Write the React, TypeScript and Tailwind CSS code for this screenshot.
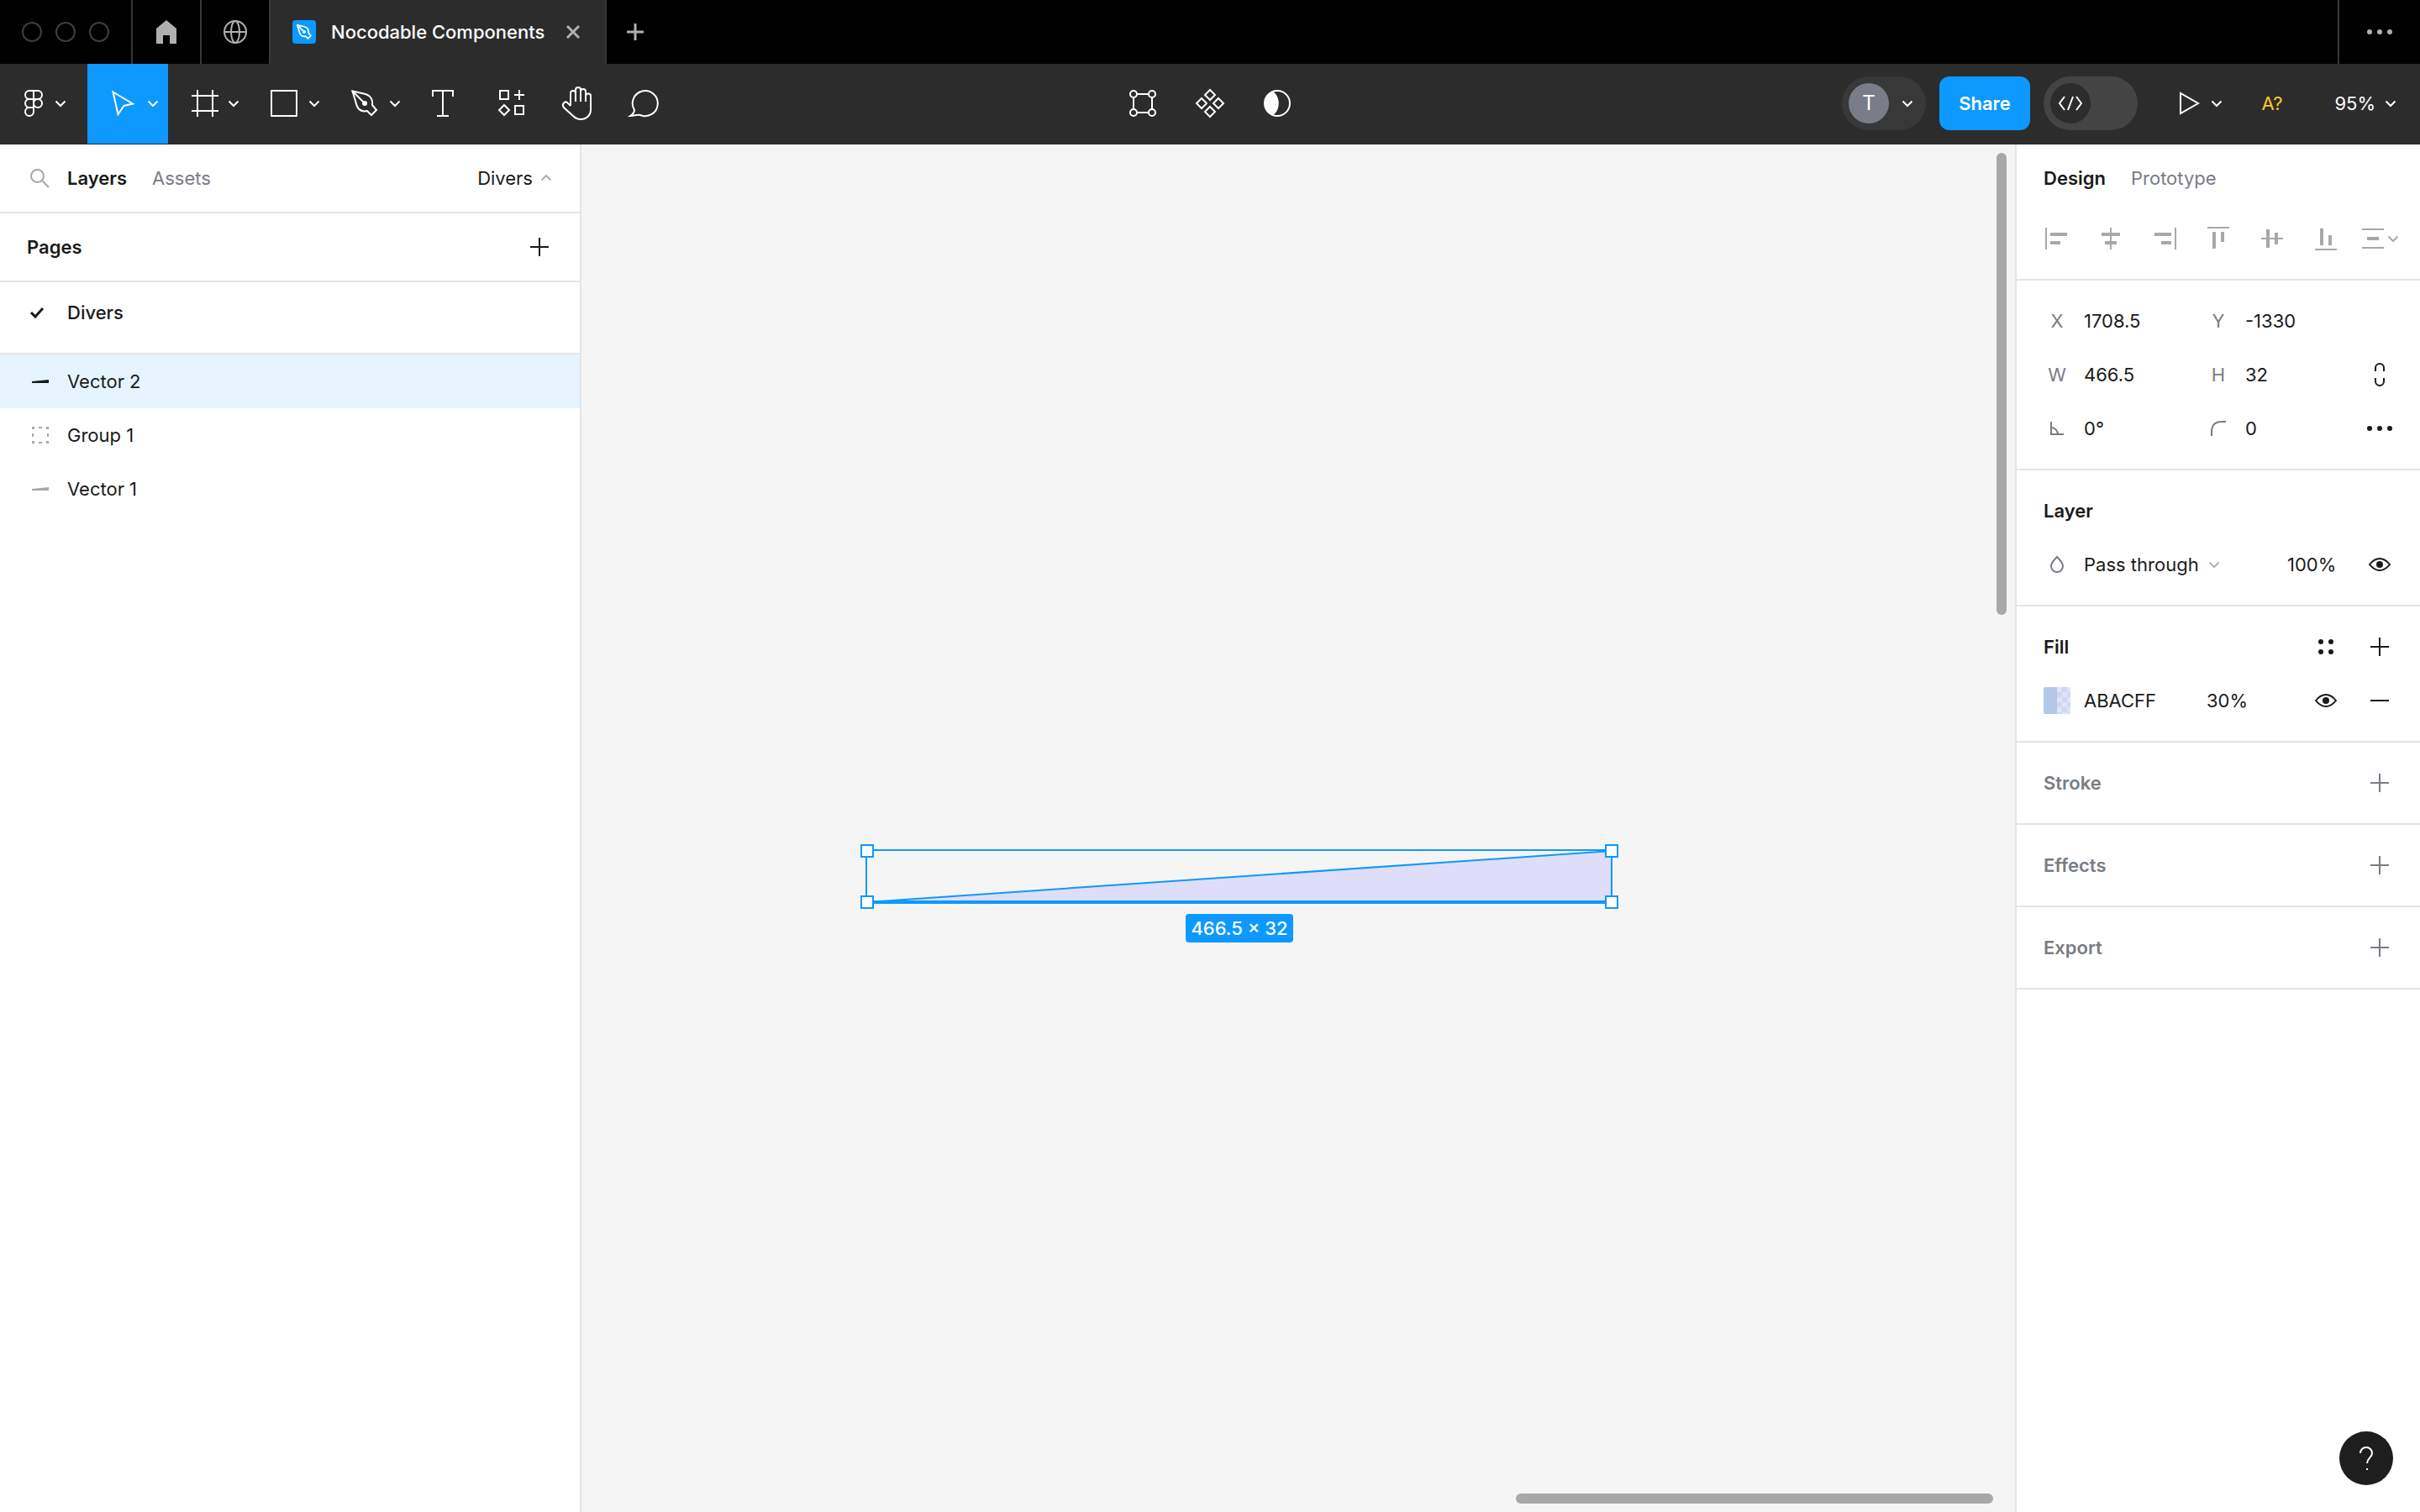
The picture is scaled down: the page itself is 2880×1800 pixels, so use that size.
import type { ReactNode } from 'react'

type GlyphProps = {
  w: number
  h: number
  className?: string
  children: ReactNode
}

const Glyph = ({ w, h, className = '', children }: GlyphProps) => (
  <svg
    width={w}
    height={h}
    viewBox={`0 0 ${w} ${h}`}
    fill="none"
    stroke="currentColor"
    strokeWidth={2}
    aria-hidden="true"
    className={`shrink-0 overflow-visible ${className}`}
  >
    {children}
  </svg>
)

const Chevron = ({ className = '' }: { className?: string }) => (
  <Glyph w={12} h={12} className={className}>
    <path d="M0.5 3.5 6 9l5.5-5.5" />
  </Glyph>
)

const Plus = ({ className = '' }: { className?: string }) => (
  <Glyph w={22} h={22} className={className}>
    <path d="M11 0v22M0 11h22" />
  </Glyph>
)

const Eye = () => (
  <Glyph w={26} h={16}>
    <path d="M1 8c4-5 8-7 12-7s8 2 12 7c-4 5-8 7-12 7S5 13 1 8z" />
    <circle cx="13" cy="8" r="4" fill="currentColor" stroke="none" />
  </Glyph>
)

const Dots = () => (
  <Glyph w={32} h={8}>
    <g fill="currentColor" stroke="none">
      <circle cx="4" cy="4" r="3" />
      <circle cx="16" cy="4" r="3" />
      <circle cx="28" cy="4" r="3" />
    </g>
  </Glyph>
)

const penPath =
  'M1.5 1.5 15 4.5C22 6 26 11 25 18l5 6-6 6-5-5C11 27 7 22 5.5 15z'

/* ---------- window tabs ---------- */

const TabBar = () => (
  <header className="flex h-[76px] shrink-0 bg-black text-[#b0b0b3]">
    <div className="flex w-[158px] items-center gap-4 border-r-2 border-[#383838] pl-[26px]">
      <span className="size-6 rounded-full border-2 border-[#3e3e3e]" />
      <span className="size-6 rounded-full border-2 border-[#3e3e3e]" />
      <span className="size-6 rounded-full border-2 border-[#3e3e3e]" />
    </div>
    <button
      type="button"
      aria-label="Home"
      className="flex w-[82px] items-center justify-center border-r-2 border-[#383838]"
    >
      <Glyph w={24} h={28}>
        <path
          d="M12 0 24 10v18h-8V18H8v10H0V10z"
          fill="currentColor"
          stroke="none"
        />
      </Glyph>
    </button>
    <button
      type="button"
      aria-label="Community"
      className="flex w-[82px] items-center justify-center border-r-2 border-[#383838]"
    >
      <Glyph w={28} h={28}>
        <circle cx="14" cy="14" r="13" />
        <ellipse cx="14" cy="14" rx="5" ry="13" />
        <path d="M1 14h26" />
      </Glyph>
    </button>
    <div className="flex w-[400px] items-center border-r-2 border-[#383838] bg-[#2c2c2c] pl-[26px]">
      <span className="flex size-7 items-center justify-center rounded bg-[#0d99ff] text-white">
        <svg
          width="18"
          height="18"
          viewBox="0 0 32 32"
          fill="none"
          stroke="currentColor"
          strokeWidth={3}
          aria-hidden="true"
        >
          <path d={penPath} />
          <path d="m2 2 13 13" />
          <circle cx="16" cy="16" r="2" fill="currentColor" />
        </svg>
      </span>
      <span className="ml-[18px] font-medium whitespace-nowrap text-white">
        Nocodable Components
      </span>
      <button type="button" aria-label="Close tab" className="mr-[30px] ml-auto">
        <Glyph w={16} h={16}>
          <path d="m1 1 14 14M15 1 1 15" strokeWidth={3} />
        </Glyph>
      </button>
    </div>
    <button
      type="button"
      aria-label="New tab"
      className="flex w-[68px] items-center justify-center"
    >
      <Glyph w={20} h={20}>
        <path d="M10 0v20M0 10h20" strokeWidth={3} />
      </Glyph>
    </button>
    <button
      type="button"
      aria-label="More"
      className="ml-auto flex w-[98px] items-center justify-center border-l-2 border-[#383838]"
    >
      <Dots />
    </button>
  </header>
)

/* ---------- toolbar ---------- */

const tools = [
  {
    name: 'Move',
    active: true,
    icon: <path d="M4.5 2.5 28 16.5 17.5 19l-7 10z" />,
  },
  {
    name: 'Frame',
    active: false,
    icon: <path d="M9 0v32M27 0v32M2 7h32M2 25h32" />,
  },
  {
    name: 'Rectangle',
    active: false,
    icon: <path d="M1 1h30v30H1z" />,
  },
  {
    name: 'Pen',
    active: false,
    icon: (
      <>
        <path d={penPath} />
        <path d="m1 1 15 15" />
        <circle cx="16" cy="16" r="3" fill="currentColor" stroke="none" />
      </>
    ),
  },
]

const ToolButton = ({ name, children }: { name: string; children: ReactNode }) => (
  <button
    type="button"
    aria-label={name}
    className="flex w-20 items-center justify-center pb-px"
  >
    {children}
  </button>
)

const Toolbar = () => (
  <div className="grid h-24 shrink-0 grid-cols-[1fr_auto_1fr] bg-[#2c2c2c] pb-px text-white">
    <div className="flex">
      <button
        type="button"
        aria-label="Main menu"
        className="flex w-[104px] items-center gap-[15px] pb-px pl-[29px]"
      >
        <Glyph w={22} h={32}>
          <path d="M11 1H6a5 5 0 0 0 0 10h10a5 5 0 0 0 0-10h-5v20H6a5 5 0 0 1 0-10" />
          <circle cx="16" cy="16" r="5" />
          <path d="M11 21v5a5 5 0 1 1-5-5" />
        </Glyph>
        <Chevron />
      </button>
      {tools.map((tool) => (
        <button
          key={tool.name}
          type="button"
          aria-label={tool.name}
          className={`flex w-24 items-center gap-3 pb-px pl-[26px] ${
            tool.active ? 'bg-[#0d99ff]' : ''
          }`}
        >
          <Glyph w={34} h={32}>
            {tool.icon}
          </Glyph>
          <Chevron />
        </button>
      ))}
      <ToolButton name="Text">
        <Glyph w={32} h={32}>
          <path d="M3 8V1h24v7M15 1v30M8 31h14" />
        </Glyph>
      </ToolButton>
      <ToolButton name="Resources">
        <Glyph w={32} h={32}>
          <path d="M3 1h10v10H3zM26 0v12M20 6h12M21 19h10v10H21z" />
          <path d="m8 18 6 6-6 6-6-6z" />
        </Glyph>
      </ToolButton>
      <ToolButton name="Hand">
        <Glyph w={40} h={40}>
          <path d="M11 23V8a3 3 0 0 1 6 0M17 18V4a3 3 0 0 1 6 0v14M23 6a3 3 0 0 1 6 0v12M29 12v-1a3 3 0 0 1 6 1v16c0 6-5 11-12 11-4 0-6-1-9-4L3 25c-3-4 1-8 4-6l4 4" />
        </Glyph>
      </ToolButton>
      <ToolButton name="Comment">
        <Glyph w={36} h={32}>
          <path d="M5 24a15 15 0 1 1 7 6c-4-1-7 1-12 1 3-2 5-4 5-7z" />
        </Glyph>
      </ToolButton>
    </div>

    <div className="flex">
      <ToolButton name="Edit object">
        <Glyph w={32} h={32}>
          <circle cx="5" cy="5" r="4" />
          <circle cx="27" cy="5" r="4" />
          <circle cx="5" cy="27" r="4" />
          <circle cx="27" cy="27" r="4" />
          <path d="M9 5h14M9 27h14M5 9v14M27 9v14" />
        </Glyph>
      </ToolButton>
      <ToolButton name="Create component">
        <Glyph w={36} h={36}>
          <path d="m18 2 6 6-6 6-6-6zM18 22l6 6-6 6-6-6zM8 12l6 6-6 6-6-6zM28 12l6 6-6 6-6-6z" />
        </Glyph>
      </ToolButton>
      <ToolButton name="Use as mask">
        <Glyph w={32} h={32}>
          <circle cx="16" cy="16" r="15" />
          <path
            d="M11 2c9 6 9 22 0 28A15 15 0 0 1 11 2z"
            fill="currentColor"
            stroke="none"
          />
        </Glyph>
      </ToolButton>
    </div>

    <div className="flex items-center justify-end pb-px">
      <button
        type="button"
        aria-label="Account"
        className="flex h-16 w-[100px] items-center gap-4 rounded-full bg-[#383838] pl-2"
      >
        <span className="flex size-12 items-center justify-center rounded-full bg-[#7a7d88] text-2xl">
          T
        </span>
        <Chevron />
      </button>
      <button
        type="button"
        className="ml-4 h-16 w-[108px] rounded-xl bg-[#0d99ff] font-semibold"
      >
        Share
      </button>
      <label className="ml-4 flex h-16 w-28 items-center rounded-full bg-[#444444] pl-2">
        <input type="checkbox" aria-label="Dev mode" className="sr-only" />
        <span className="flex size-12 items-center justify-center rounded-full bg-[#2c2c2c]">
          <Glyph w={30} h={16}>
            <path d="M8 0 2 8l6 8M18 0l-6 16M22 0l6 8-6 8" />
          </Glyph>
        </span>
      </label>
      <button
        type="button"
        aria-label="Present"
        className="ml-8 flex w-24 items-center gap-3.5 pl-[18px]"
      >
        <Glyph w={24} h={28}>
          <path d="M1 2v24l21-12z" />
        </Glyph>
        <Chevron />
      </button>
      <button type="button" className="w-16 text-[#f9ca2c]">
        A?
      </button>
      <button
        type="button"
        className="flex w-36 items-center justify-end gap-3 pr-[29px]"
      >
        95%
        <Chevron />
      </button>
    </div>
  </div>
)

/* ---------- left panel ---------- */

const GroupIcon = () => (
  <Glyph w={20} h={20} className="text-[#a8a8a8]">
    <path
      d="M0 0h3v3H0zM8 0h4v2H8zM17 0h3v3h-3zM0 8h2v4H0zM18 8h2v4h-2zM0 17h3v3H0zM8 18h4v2H8zM17 17h3v3h-3z"
      fill="currentColor"
      stroke="none"
    />
  </Glyph>
)

const VectorIcon = ({ className }: { className: string }) => (
  <Glyph w={20} h={20} className={className}>
    <path d="M0 10 20 8v4H0z" fill="currentColor" stroke="none" />
  </Glyph>
)

const layers = [
  {
    name: 'Vector 2',
    selected: true,
    icon: <VectorIcon className="text-[#1a1a1a]" />,
  },
  { name: 'Group 1', selected: false, icon: <GroupIcon /> },
  {
    name: 'Vector 1',
    selected: false,
    icon: <VectorIcon className="text-[#a8a8a8]" />,
  },
]

const LeftPanel = () => (
  <aside className="w-[692px] shrink-0 border-r-2 border-[#e5e5e5] bg-white">
    <div className="flex h-[82px] items-center border-b-2 border-[#e5e5e5] pr-[34px] pl-9">
      <button type="button" aria-label="Search" className="text-[#a8a8a8]">
        <Glyph w={22} h={22}>
          <circle cx="8.5" cy="8.5" r="7.5" />
          <path d="m14 14 8 8" />
        </Glyph>
      </button>
      <button type="button" className="ml-[22px] font-semibold">
        Layers
      </button>
      <button type="button" className="ml-[30px] text-[#797c85]">
        Assets
      </button>
      <button type="button" className="ml-auto flex items-center gap-2.5">
        Divers
        <Chevron className="rotate-180 text-[#a8b0bc]" />
      </button>
    </div>
    <div className="flex h-[82px] items-center justify-between border-b-2 border-[#e5e5e5] pr-[37px] pl-8">
      <h2 className="font-semibold">Pages</h2>
      <button type="button" aria-label="Add page">
        <Plus />
      </button>
    </div>
    <div className="border-b-2 border-[#e5e5e5] pt-1 pb-4">
      <button
        type="button"
        className="flex h-16 w-full items-center gap-7 pl-9 font-medium"
      >
        <Glyph w={16} h={12}>
          <path d="m1 6 5 5 9-10" strokeWidth={3} />
        </Glyph>
        Divers
      </button>
    </div>
    <ul>
      {layers.map((layer) => (
        <li key={layer.name}>
          <button
            type="button"
            className={`flex h-16 w-full items-center gap-[22px] pl-[38px] ${
              layer.selected ? 'bg-[#e5f4ff]' : ''
            }`}
          >
            {layer.icon}
            {layer.name}
          </button>
        </li>
      ))}
    </ul>
  </aside>
)

/* ---------- canvas ---------- */

const Canvas = () => (
  <main className="relative min-w-0 flex-1 overflow-hidden bg-[#f5f5f5]">
    <div className="absolute top-[833px] left-[332px] flex flex-col items-center gap-[5px] text-[#0d99ff]">
      <Glyph w={902} h={78}>
        <path d="M8 69 894 8v61z" fill="#dedef9" />
        <path d="M7 7h887v63H7z" />
        <path d="M8 69h886" strokeWidth={4} />
        <g fill="#ffffff">
          <path d="M1 1h14v14H1zM887 1h14v14h-14zM1 62h14v14H1zM887 62h14v14h-14z" />
        </g>
      </Glyph>
      <span className="flex h-[34px] w-32 items-center justify-center rounded bg-[#0d99ff] font-medium whitespace-nowrap text-white">
        466.5 × 32
      </span>
    </div>
    <div className="absolute top-2.5 right-2.5 h-[550px] w-3 rounded-full bg-[#a8a8a8]" />
    <div className="absolute right-[26px] bottom-2.5 h-3 w-[568px] rounded-full bg-[#a8a8a8]" />
  </main>
)

/* ---------- right panel ---------- */

const alignments = [
  { name: 'Align left', d: 'M0 1h2v26H0zM6 7h20v4H6zM6 17h12v4H6z' },
  {
    name: 'Align horizontal centers',
    d: 'M13 1h2v26h-2zM3 7h22v4H3zM7 17h14v4H7z',
  },
  { name: 'Align right', d: 'M26 1h2v26h-2zM2 7h20v4H2zM10 17h12v4H10z' },
  { name: 'Align top', d: 'M1 0h26v2H1zM7 6h4v20H7zM17 6h4v12h-4z' },
  {
    name: 'Align vertical centers',
    d: 'M1 13h26v2H1zM7 3h4v22H7zM17 7h4v14h-4z',
  },
  { name: 'Align bottom', d: 'M1 26h26v2H1zM7 2h4v20H7zM17 10h4v12h-4z' },
]

type FieldProps = { name: string; value: string; icon?: ReactNode }

const Field = ({ name, value, icon }: FieldProps) => (
  <label className="flex h-16 items-center">
    <span className="flex w-16 justify-center text-[#797c85]">
      {icon ?? name}
    </span>
    <input
      aria-label={name}
      defaultValue={value}
      className="w-32 bg-transparent outline-none"
    />
  </label>
)

const RightPanel = () => (
  <aside className="relative w-[482px] shrink-0 border-l-2 border-[#e5e5e5] bg-white">
    <div className="flex h-20 items-center gap-[30px] px-8">
      <button type="button" className="font-semibold">
        Design
      </button>
      <button type="button" className="text-[#797c85]">
        Prototype
      </button>
    </div>
    <div className="grid grid-cols-7 border-b-2 border-[#e5e5e5] px-4 pb-4 text-[#a8a8a8]">
      {alignments.map((item) => (
        <button
          key={item.name}
          type="button"
          aria-label={item.name}
          className="flex h-16 items-center justify-center"
        >
          <Glyph w={28} h={28}>
            <path d={item.d} fill="currentColor" stroke="none" />
          </Glyph>
        </button>
      ))}
      <button
        type="button"
        aria-label="Distribute"
        className="flex h-16 items-center justify-center gap-1"
      >
        <Glyph w={28} h={28}>
          <path
            d="M1 2h26v2H1zM1 24h26v2H1zM7 12h14v4H7z"
            fill="currentColor"
            stroke="none"
          />
        </Glyph>
        <Chevron />
      </button>
    </div>

    <section className="grid grid-cols-[192px_192px_1fr] border-b-2 border-[#e5e5e5] p-4">
      <Field name="X" value="1708.5" />
      <Field name="Y" value="-1330" />
      <span />
      <Field name="W" value="466.5" />
      <Field name="H" value="32" />
      <button
        type="button"
        aria-label="Constrain proportions"
        className="flex items-center justify-center"
      >
        <Glyph w={12} h={28}>
          <path d="M1 10V6a5 5 0 0 1 10 0v4M1 18v4a5 5 0 0 0 10 0v-4" />
        </Glyph>
      </button>
      <Field
        name="Rotation"
        value="0°"
        icon={
          <Glyph w={16} h={16}>
            <path d="M1 0v15h15M1 7a8 8 0 0 1 8 8" />
          </Glyph>
        }
      />
      <Field
        name="Corner radius"
        value="0"
        icon={
          <Glyph w={18} h={18}>
            <path d="M1 18v-5C1 5 5 1 13 1h5" />
          </Glyph>
        }
      />
      <button
        type="button"
        aria-label="Independent corners"
        className="flex items-center justify-center"
      >
        <Dots />
      </button>
    </section>

    <section className="border-b-2 border-[#e5e5e5] p-4">
      <h2 className="flex h-16 items-center pl-4 font-semibold">Layer</h2>
      <div className="flex h-16 items-center">
        <span className="flex w-16 justify-center text-[#797c85]">
          <Glyph w={16} h={20}>
            <path d="M8 1C5 4 1 8 1 12a7 7 0 0 0 14 0c0-4-4-8-7-11z" />
          </Glyph>
        </span>
        <select
          aria-label="Blend mode"
          className="w-[143px] appearance-none bg-transparent outline-none"
        >
          <option>Pass through</option>
        </select>
        <Chevron className="ml-1.5 text-[#a8b0bc]" />
        <input
          aria-label="Layer opacity"
          defaultValue="100%"
          className="ml-auto w-[78px] bg-transparent outline-none"
        />
        <button
          type="button"
          aria-label="Toggle layer"
          className="flex w-16 justify-center"
        >
          <Eye />
        </button>
      </div>
    </section>

    <section className="border-b-2 border-[#e5e5e5] p-4">
      <div className="flex h-16 items-center pl-4">
        <h2 className="mr-auto font-semibold">Fill</h2>
        <button
          type="button"
          aria-label="Styles"
          className="flex w-16 justify-center"
        >
          <Glyph w={18} h={18}>
            <g fill="currentColor" stroke="none">
              <circle cx="3" cy="3" r="3" />
              <circle cx="15" cy="3" r="3" />
              <circle cx="3" cy="15" r="3" />
              <circle cx="15" cy="15" r="3" />
            </g>
          </Glyph>
        </button>
        <button
          type="button"
          aria-label="Add fill"
          className="flex w-16 justify-center"
        >
          <Plus />
        </button>
      </div>
      <div className="flex h-16 items-center pl-4">
        <button
          type="button"
          aria-label="Fill color"
          className="flex size-8 overflow-hidden rounded-xs"
        >
          <span className="h-8 w-4 bg-[#b3c8e8]" />
          <span className="h-8 w-4 bg-[repeating-conic-gradient(#cfd8f0_0_25%,#e0e3fb_0_50%)] bg-[length:12px_12px]" />
        </button>
        <input
          aria-label="Fill hex"
          defaultValue="ABACFF"
          className="ml-4 w-[146px] bg-transparent outline-none"
        />
        <input
          aria-label="Fill opacity"
          defaultValue="30%"
          className="w-20 bg-transparent outline-none"
        />
        <button
          type="button"
          aria-label="Toggle fill"
          className="ml-auto flex w-16 justify-center"
        >
          <Eye />
        </button>
        <button
          type="button"
          aria-label="Remove fill"
          className="flex w-16 justify-center"
        >
          <Glyph w={22} h={22}>
            <path d="M0 11h22" />
          </Glyph>
        </button>
      </div>
    </section>

    {['Stroke', 'Effects', 'Export'].map((title) => (
      <section
        key={title}
        className="border-b-2 border-[#e5e5e5] p-4 text-[#797c85]"
      >
        <div className="flex h-16 items-center justify-between pl-4">
          <h2 className="font-semibold">{title}</h2>
          <button
            type="button"
            aria-label={`Add ${title}`}
            className="flex w-16 justify-center"
          >
            <Plus />
          </button>
        </div>
      </section>
    ))}

    <button
      type="button"
      aria-label="Help"
      className="absolute right-8 bottom-8 flex size-16 items-center justify-center rounded-full bg-[#1e1e1e] text-white"
    >
      <Glyph w={16} h={28}>
        <path d="M1 8a7 7 0 0 1 14 0c0 5-6 6-6 12M9 26v2" />
      </Glyph>
    </button>
  </aside>
)

const App = () => {
  return (
    <div className="flex h-screen flex-col overflow-hidden font-[Inter,sans-serif] text-[22px] leading-8 text-[#1a1a1a]">
      <TabBar />
      <Toolbar />
      <div className="flex min-h-0 flex-1">
        <LeftPanel />
        <Canvas />
        <RightPanel />
      </div>
    </div>
  )
}

export default App
